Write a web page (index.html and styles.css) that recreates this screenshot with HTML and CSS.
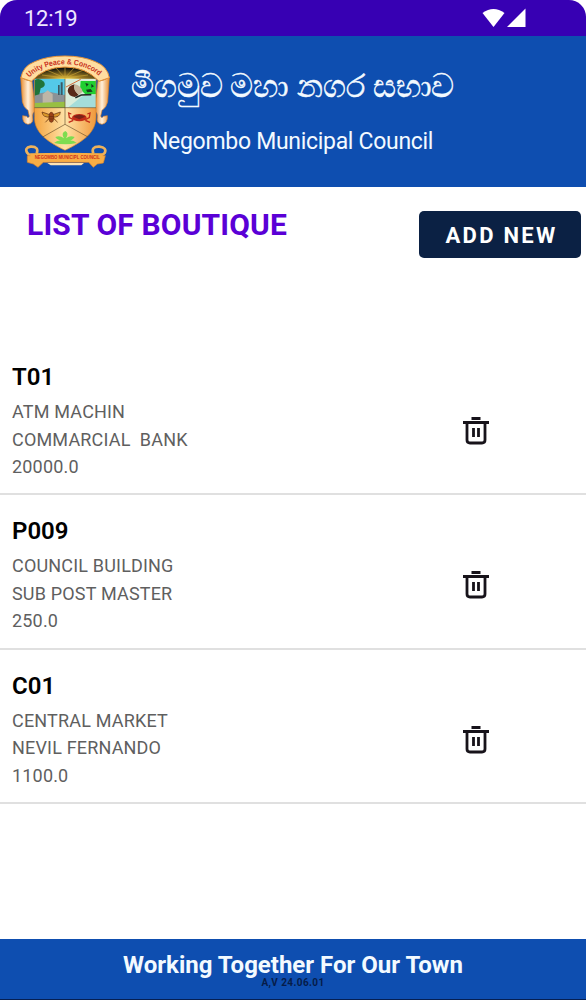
FILE: index.html
```html
<!DOCTYPE html>
<html lang="en">
<head>
<meta charset="UTF-8">
<meta name="viewport" content="width=device-width, initial-scale=1.0">
<title>Negombo Municipal Council</title>
<link rel="stylesheet" href="styles.css">
</head>
<body>

<div class="screen">
  <div class="status-bar">
    <span class="time">12:19</span>
    <svg class="status-icons" viewBox="0 0 46 20" width="46" height="20">
      <path d="M0.5 5 Q11.500 -3 22.500 5 L11.500 19Z" fill="#fff"/>
      <path d="M25 19 L43.500 0.500 V19Z" fill="#fff"/>
    </svg>
  </div>

  <header>
    <svg class="crest" viewBox="0 0 330 390" width="110" height="130">
      <defs>
        <linearGradient id="gold" x1="0" y1="0" x2="1" y2="0">
          <stop offset="0" stop-color="#f3a13c"/>
          <stop offset=".5" stop-color="#ffe2a6"/>
          <stop offset="1" stop-color="#f0973a"/>
        </linearGradient>
        <linearGradient id="ribbon" x1="0" y1="0" x2="1" y2="0">
          <stop offset="0" stop-color="#e98b2c"/>
          <stop offset=".5" stop-color="#fff0dc"/>
          <stop offset="1" stop-color="#e98b2c"/>
        </linearGradient>
        <radialGradient id="sun" cx=".5" cy="1" r=".75">
          <stop offset="0" stop-color="#ffe25a"/>
          <stop offset=".35" stop-color="#9b7a22"/>
          <stop offset="1" stop-color="#14150d"/>
        </radialGradient>
        <clipPath id="shield"><path d="M73 96 H258 V215 C258 262 222 288 165 316 C108 288 73 262 73 215Z"/></clipPath>
      </defs>

      <!-- side ribbons -->
      <path d="M32 96 Q48 108 66 108 L76 196 Q66 206 68 216 Q72 236 54 238 Q36 234 38 212 L50 214 Q54 222 58 214 L54 196 Q40 186 37 170Z" fill="url(#ribbon)" stroke="#d9822b" stroke-width="2"/>
      <path d="M298 96 Q282 108 264 108 L254 196 Q264 206 262 216 Q258 236 276 238 Q294 234 292 212 L280 214 Q276 222 272 214 L276 196 Q290 186 293 170Z" fill="url(#ribbon)" stroke="#d9822b" stroke-width="2"/>

      <!-- shield -->
      <g clip-path="url(#shield)">
        <rect x="70" y="90" width="190" height="230" fill="url(#gold)"/>
        <rect x="73" y="100" width="92" height="88" fill="#54c9e8"/>
        <path d="M73 148 L116 140 L165 150 V188 H73Z" fill="#8b9296"/>
        <path d="M98 148 L113 136 L128 148 V176 H98Z" fill="#bdb6a7"/>
        <path d="M144 120 H149 V150 H144Z M152 112 H158 V150 H152Z" fill="#3c5963"/>
        <path d="M73 106 Q88 96 102 110 Q110 124 92 130 L88 148 L73 152Z" fill="#20743a"/>
        <path d="M73 174 L165 170 V188 H73Z" fill="#98bf43"/>
        <rect x="165" y="100" width="95" height="88" fill="#d9eddb"/>
        <path d="M212 108 H260 V148 H226 L210 132Z" fill="#20cf32"/>
        <path d="M226 114 l10 3 -6 8z M244 116 l8 8 -8 4z M228 134 l14 -2 6 8 -16 2z" fill="#153f1e"/>
        <path d="M168 126 L212 103" stroke="#d46b38" stroke-width="3"/>
        <path d="M194 118 Q174 122 173 138 Q176 154 194 156 L206 150 Q188 134 194 118Z" fill="#582817"/>
        <path d="M194 118 Q188 134 206 150 L218 140 Q212 120 194 118Z" fill="#c6b49a"/>
        <path d="M176 186 L216 154 L258 150 V188Z" fill="#a4ddda"/>
        <path d="M196 158 L214 150 L244 149" stroke="#232c2a" stroke-width="5" fill="none"/>
      </g>
      <path d="M73 96 H258 V215 C258 262 222 288 165 316 C108 288 73 262 73 215Z" fill="none" stroke="#cf8128" stroke-width="2"/>
      <path d="M165 100 V238 M73 188 H258 M98 276 L165 238 L234 276" fill="none" stroke="#6b522c" stroke-width="2"/>

      <!-- bee -->
      <g stroke="#5c2b11" stroke-width="2">
        <path d="M122 210 L96 201 Q98 219 122 216 L106 232 M126 210 L151 201 Q150 219 126 216 L143 232" fill="#d9972a"/>
        <ellipse cx="124" cy="217" rx="7" ry="15" fill="#9c4316"/>
        <path d="M117 215 H131 M118 222 H130"/>
      </g>
      <!-- crab -->
      <path d="M190 224 L178 218 L176 204 L184 207 M226 224 L238 218 L240 204 L232 207 M190 226 L176 232 M226 226 L240 232" fill="none" stroke="#c22c18" stroke-width="4"/>
      <ellipse cx="208" cy="218" rx="22" ry="11" fill="#c22c18"/>
      <path d="M190 215 Q208 204 226 215 L208 223Z" fill="#7a2418"/>
      <!-- plant -->
      <path d="M132 294 Q146 284 156 288 Q140 284 136 276 Q150 270 162 280 Q152 264 166 258 Q178 264 168 280 Q180 270 194 276 Q188 286 174 288 Q188 284 200 294 Q166 302 132 294Z" fill="#7fdc50"/>

      <!-- rising sun and motto arch -->
      <path d="M72 101 Q112 61 165 61 Q218 61 260 101Z" fill="url(#sun)"/>
      <path d="M165 99 L112 76 M165 99 L136 67 M165 99 V62 M165 99 L194 67 M165 99 L218 76 M165 99 L96 90 M165 99 L234 90" stroke="#c9a535" stroke-width="2"/>
      <path d="M33 98 Q38 64 74 50 Q112 33 165 33 Q218 33 256 50 Q292 64 298 98 L267 109 Q228 66 165 66 Q102 66 64 109Z" fill="#ffdda0" stroke="#e99235" stroke-width="3"/>
      <path id="arch" d="M56 99 Q97 58 165 58 Q233 58 275 100" fill="none"/>
      <text class="motto"><textPath href="#arch" textLength="228" lengthAdjust="spacingAndGlyphs" startOffset="2">Unity Peace &amp; Concord</textPath></text>

      <!-- name scroll -->
      <path d="M80 326 Q88 304 62 305 Q42 308 52 324 L64 336 M250 326 Q242 304 268 305 Q292 308 284 324 L270 336" fill="none" stroke="#edb25c" stroke-width="8"/>
      <path d="M52 332 H286 L280 354 L262 357 L250 367 L236 352 H100 L84 367 L70 357 L52 352Z" fill="#f7ad45" stroke="#df8428" stroke-width="2"/>
      <path d="M112 354 H222 L214 361 H122Z" fill="#ffe3b3"/>
      <path d="M60 325 Q165 322 278 325 V351 Q165 347 64 351Z" fill="#f7ad45"/>
      <text class="scroll-name" x="74" y="343" textLength="196" lengthAdjust="spacingAndGlyphs">NEGOMBO MUNICIPL COUNCIL</text>
    </svg>
    <div class="titles">
      <h1 lang="si">මීගමුව මහා නගර සභාව</h1>
      <p>Negombo Municipal Council</p>
    </div>
  </header>

  <div class="toolbar">
    <h2>LIST OF BOUTIQUE</h2>
    <button class="add-btn">ADD NEW</button>
  </div>

  <svg class="sprite" width="0" height="0">
    <symbol id="trash" viewBox="0 0 28 30">
      <path d="M9.500 2.500 H18.500 M1 6.500 H27 M5 6.500 V24 Q5 27 8 27 H20 Q23 27 23 24 V6.500 M11.500 12 V21 M16.500 12 V21" fill="none" stroke="#17131a" stroke-width="2.800"/>
    </symbol>
  </svg>

  <main class="list">
    <div class="item">
      <div class="item-text">
        <h3>T01</h3>
        <p>ATM MACHIN</p>
        <p>COMMARCIAL&nbsp; BANK</p>
        <p>20000.0</p>
      </div>
      <button class="delete-btn" aria-label="Delete"><svg width="28" height="30"><use href="#trash"/></svg></button>
    </div>
    <div class="item">
      <div class="item-text">
        <h3>P009</h3>
        <p>COUNCIL BUILDING</p>
        <p>SUB POST MASTER</p>
        <p>250.0</p>
      </div>
      <button class="delete-btn" aria-label="Delete"><svg width="28" height="30"><use href="#trash"/></svg></button>
    </div>
    <div class="item">
      <div class="item-text">
        <h3>C01</h3>
        <p>CENTRAL MARKET</p>
        <p>NEVIL FERNANDO</p>
        <p>1100.0</p>
      </div>
      <button class="delete-btn" aria-label="Delete"><svg width="28" height="30"><use href="#trash"/></svg></button>
    </div>
  </main>

  <footer>
    <p class="slogan">Working Together For Our Town</p>
    <p class="version">A,V 24.06.01</p>
  </footer>
</div>

</body>
</html>
```
FILE: styles.css
```css
:root{
  --blue:#0e4eb0;
  --purple:#3700b3;
  --navy:#0b2144;
}
*{box-sizing:border-box;}
body{
  margin:0;
  background:#fff;
  font-family:Roboto, "Noto Sans", sans-serif;
}
h1,h2,h3,p{margin:0;}
.screen{
  height:1000px;
  display:flex;
  flex-direction:column;
}
.status-bar{
  height:36px;
  padding:0 58px 0 24px;
  display:flex;
  align-items:center;
  justify-content:space-between;
  background:var(--purple);
  border-radius:17px 17px 0 0;
  color:#eee6ff;
}
.time{font-size:22px;line-height:36px;padding-top:2px;letter-spacing:-0.3px;}
.status-icons{display:block;}

header{
  height:151px;
  padding:9px 0 0 10px;
  display:flex;
  background:var(--blue);
  color:#f3faff;
}
.crest{flex:none;}
.motto{
  font:bold 23px "Liberation Sans", sans-serif;
  fill:#c8301c;
}
.scroll-name{
  font:bold 16px "Liberation Sans", sans-serif;
  fill:#d0301b;
}
.titles{padding-left:11px;}
.titles h1{
  height:83px;
  font-size:32px;
  font-weight:400;
  line-height:83px;
  letter-spacing:-0.1px;
  white-space:nowrap;
  -webkit-text-stroke:0.5px #f3faff;
}
.titles p{
  padding-left:21px;
  font-size:23px;
  line-height:28px;
  letter-spacing:-0.3px;
  white-space:nowrap;
}

.toolbar{
  height:154px;
  padding:24px 5px 0 27px;
  display:flex;
  align-items:flex-start;
  justify-content:space-between;
}
.toolbar h2{
  font-size:30px;
  font-weight:700;
  line-height:28px;
  letter-spacing:0.15px;
  color:#5a00d6;
}
.add-btn{
  width:162px;
  height:47px;
  padding:2px 0 0 3px;
  border:none;
  border-radius:5px;
  background:var(--navy);
  color:#fff;
  font:700 22px Roboto, sans-serif;
  letter-spacing:2.300px;
}
.sprite{display:none;}

.list{flex:1;}
.item{
  height:154.3px;
  padding:19px 96px 0 12px;
  display:flex;
  justify-content:space-between;
  border-bottom:2px solid #e0e0e0;
}
.item h3{
  margin-bottom:4px;
  font-size:24px;
  font-weight:600;
  line-height:34px;
  color:#000;
}
.item p{
  font-size:18px;
  line-height:27.5px;
  letter-spacing:0.18px;
  color:#5f5f5f;
}
.delete-btn{
  width:28px;
  height:30px;
  margin-top:56px;
  padding:0;
  border:none;
  background:none;
}
.delete-btn svg{display:block;}

footer{
  height:61px;
  padding-top:11px;
  background:var(--blue);
  border-bottom:1px solid #061f52;
  text-align:center;
}
.slogan{
  font-size:24px;
  font-weight:700;
  line-height:30px;
  color:#f3faff;
}
.version{
  margin-top:-3px;
  font-size:10px;
  font-weight:700;
  line-height:12px;
  letter-spacing:0.4px;
  color:#061c49;
}
```
